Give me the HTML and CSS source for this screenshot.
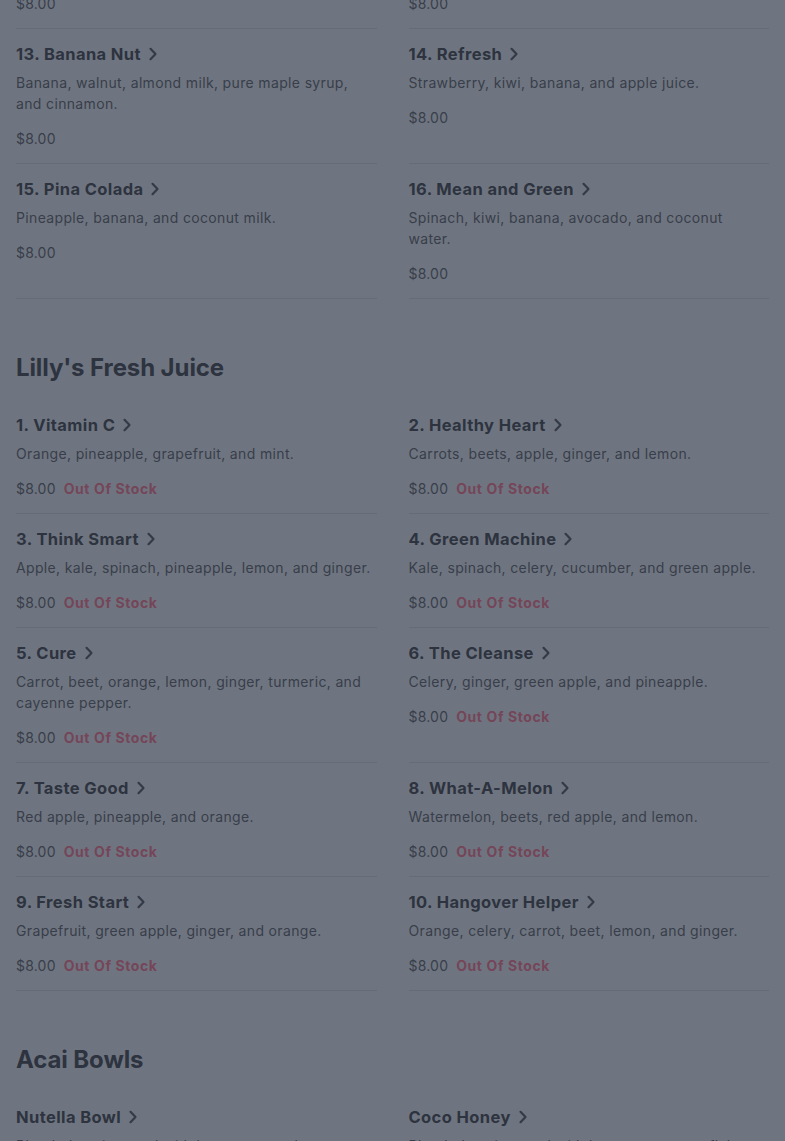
FILE: index.html
```html
<!DOCTYPE html>
<html lang="en">
<head>
<meta charset="utf-8">
<title>Menu</title>
<link rel="stylesheet" href="styles.css">
</head>
<body>
<main class="page">
  <section class="section section-first">
    <div class="grid">
      <article class="item"><h3 class="item-title">11. Berry Blast <svg class="chev" viewBox="0 0 10 14"><path d="M2.5 1.8 L7.5 7 L2.5 12.2"/></svg></h3><p class="item-desc">Strawberry, blueberry, banana, and apple juice.</p><p class="item-price"><span>$8.00</span></p></article>
      <article class="item"><h3 class="item-title">12. Tropical <svg class="chev" viewBox="0 0 10 14"><path d="M2.5 1.8 L7.5 7 L2.5 12.2"/></svg></h3><p class="item-desc">Mango, pineapple, banana, and orange juice.</p><p class="item-price"><span>$8.00</span></p></article>
      <article class="item"><h3 class="item-title">13. Banana Nut <svg class="chev" viewBox="0 0 10 14"><path d="M2.5 1.8 L7.5 7 L2.5 12.2"/></svg></h3><p class="item-desc">Banana, walnut, almond milk, pure maple syrup, and cinnamon.</p><p class="item-price"><span>$8.00</span></p></article>
      <article class="item"><h3 class="item-title">14. Refresh <svg class="chev" viewBox="0 0 10 14"><path d="M2.5 1.8 L7.5 7 L2.5 12.2"/></svg></h3><p class="item-desc">Strawberry, kiwi, banana, and apple juice.</p><p class="item-price"><span>$8.00</span></p></article>
      <article class="item"><h3 class="item-title">15. Pina Colada <svg class="chev" viewBox="0 0 10 14"><path d="M2.5 1.8 L7.5 7 L2.5 12.2"/></svg></h3><p class="item-desc">Pineapple, banana, and coconut milk.</p><p class="item-price"><span>$8.00</span></p></article>
      <article class="item"><h3 class="item-title">16. Mean and Green <svg class="chev" viewBox="0 0 10 14"><path d="M2.5 1.8 L7.5 7 L2.5 12.2"/></svg></h3><p class="item-desc">Spinach, kiwi, banana, avocado, and coconut water.</p><p class="item-price"><span>$8.00</span></p></article>
    </div>
  </section>

  <section class="section">
    <h2 class="section-title">Lilly's Fresh Juice</h2>
    <div class="grid">
      <article class="item"><h3 class="item-title">1. Vitamin C <svg class="chev" viewBox="0 0 10 14"><path d="M2.5 1.8 L7.5 7 L2.5 12.2"/></svg></h3><p class="item-desc">Orange, pineapple, grapefruit, and mint.</p><p class="item-price"><span>$8.00</span><span class="oos">Out Of Stock</span></p></article>
      <article class="item"><h3 class="item-title">2. Healthy Heart <svg class="chev" viewBox="0 0 10 14"><path d="M2.5 1.8 L7.5 7 L2.5 12.2"/></svg></h3><p class="item-desc">Carrots, beets, apple, ginger, and lemon.</p><p class="item-price"><span>$8.00</span><span class="oos">Out Of Stock</span></p></article>
      <article class="item"><h3 class="item-title">3. Think Smart <svg class="chev" viewBox="0 0 10 14"><path d="M2.5 1.8 L7.5 7 L2.5 12.2"/></svg></h3><p class="item-desc">Apple, kale, spinach, pineapple, lemon, and ginger.</p><p class="item-price"><span>$8.00</span><span class="oos">Out Of Stock</span></p></article>
      <article class="item"><h3 class="item-title">4. Green Machine <svg class="chev" viewBox="0 0 10 14"><path d="M2.5 1.8 L7.5 7 L2.5 12.2"/></svg></h3><p class="item-desc">Kale, spinach, celery, cucumber, and green apple.</p><p class="item-price"><span>$8.00</span><span class="oos">Out Of Stock</span></p></article>
      <article class="item"><h3 class="item-title">5. Cure <svg class="chev" viewBox="0 0 10 14"><path d="M2.5 1.8 L7.5 7 L2.5 12.2"/></svg></h3><p class="item-desc">Carrot, beet, orange, lemon, ginger, turmeric, and cayenne pepper.</p><p class="item-price"><span>$8.00</span><span class="oos">Out Of Stock</span></p></article>
      <article class="item"><h3 class="item-title">6. The Cleanse <svg class="chev" viewBox="0 0 10 14"><path d="M2.5 1.8 L7.5 7 L2.5 12.2"/></svg></h3><p class="item-desc">Celery, ginger, green apple, and pineapple.</p><p class="item-price"><span>$8.00</span><span class="oos">Out Of Stock</span></p></article>
      <article class="item"><h3 class="item-title">7. Taste Good <svg class="chev" viewBox="0 0 10 14"><path d="M2.5 1.8 L7.5 7 L2.5 12.2"/></svg></h3><p class="item-desc">Red apple, pineapple, and orange.</p><p class="item-price"><span>$8.00</span><span class="oos">Out Of Stock</span></p></article>
      <article class="item"><h3 class="item-title">8. What-A-Melon <svg class="chev" viewBox="0 0 10 14"><path d="M2.5 1.8 L7.5 7 L2.5 12.2"/></svg></h3><p class="item-desc">Watermelon, beets, red apple, and lemon.</p><p class="item-price"><span>$8.00</span><span class="oos">Out Of Stock</span></p></article>
      <article class="item"><h3 class="item-title">9. Fresh Start <svg class="chev" viewBox="0 0 10 14"><path d="M2.5 1.8 L7.5 7 L2.5 12.2"/></svg></h3><p class="item-desc">Grapefruit, green apple, ginger, and orange.</p><p class="item-price"><span>$8.00</span><span class="oos">Out Of Stock</span></p></article>
      <article class="item"><h3 class="item-title">10. Hangover Helper <svg class="chev" viewBox="0 0 10 14"><path d="M2.5 1.8 L7.5 7 L2.5 12.2"/></svg></h3><p class="item-desc">Orange, celery, carrot, beet, lemon, and ginger.</p><p class="item-price"><span>$8.00</span><span class="oos">Out Of Stock</span></p></article>
    </div>
  </section>

  <section class="section">
    <h2 class="section-title">Acai Bowls</h2>
    <div class="grid">
      <article class="item"><h3 class="item-title">Nutella Bowl <svg class="chev" viewBox="0 0 10 14"><path d="M2.5 1.8 L7.5 7 L2.5 12.2"/></svg></h3><p class="item-desc">Blended acai topped with banana, strawberry, granola, and Nutella.</p><p class="item-price"><span>$12.00</span></p></article>
      <article class="item"><h3 class="item-title">Coco Honey <svg class="chev" viewBox="0 0 10 14"><path d="M2.5 1.8 L7.5 7 L2.5 12.2"/></svg></h3><p class="item-desc">Blended acai topped with banana, coconut flakes, and honey.</p><p class="item-price"><span>$12.00</span></p></article>
    </div>
  </section>
</main>
</body>
</html>
```

FILE: styles.css
```css
* { box-sizing: border-box; }

html, body {
  margin: 0;
  padding: 0;
  background: #6f7580;
  overflow: hidden;
}

body {
  font-family: "Inter", "Open Sans", "DejaVu Sans", sans-serif;
  color: #343a46;
}

.page {
  padding: 0 16px;
}

.section {
  padding-top: 53px;
}

.section-first {
  padding-top: 0;
  margin-top: -85px;
}

.section-title {
  margin: 0 0 16px;
  font-size: 24px;
  line-height: 32px;
  font-weight: 700;
  color: #2d333f;
  letter-spacing: -0.1px;
}

.grid {
  display: grid;
  grid-template-columns: 1fr 1fr;
  column-gap: 32px;
}

.item {
  padding: 13px 0 14px;
  border-bottom: 1px solid #666c77;
}

.item-title {
  margin: 0 0 6px;
  display: flex;
  align-items: center;
  gap: 8px;
  font-size: 16.5px;
  line-height: 24px;
  font-weight: 700;
  letter-spacing: 0.4px;
  color: #2d333f;
}

.chev {
  width: 10px;
  height: 14px;
  flex: none;
  margin-left: -1px;
}

.chev path {
  fill: none;
  stroke: #343a46;
  stroke-width: 2.2;
  stroke-linecap: round;
  stroke-linejoin: round;
}

.item-desc {
  margin: 0 0 14px;
  font-size: 14px;
  line-height: 21px;
  letter-spacing: 0.35px;
  color: #383e4a;
}

.item-price {
  margin: 0;
  display: flex;
  gap: 8px;
  font-size: 14px;
  line-height: 21px;
  letter-spacing: 0.2px;
  color: #383e4a;
}

.oos {
  font-weight: 700;
  letter-spacing: 0.6px;
  color: #754558;
}
```
